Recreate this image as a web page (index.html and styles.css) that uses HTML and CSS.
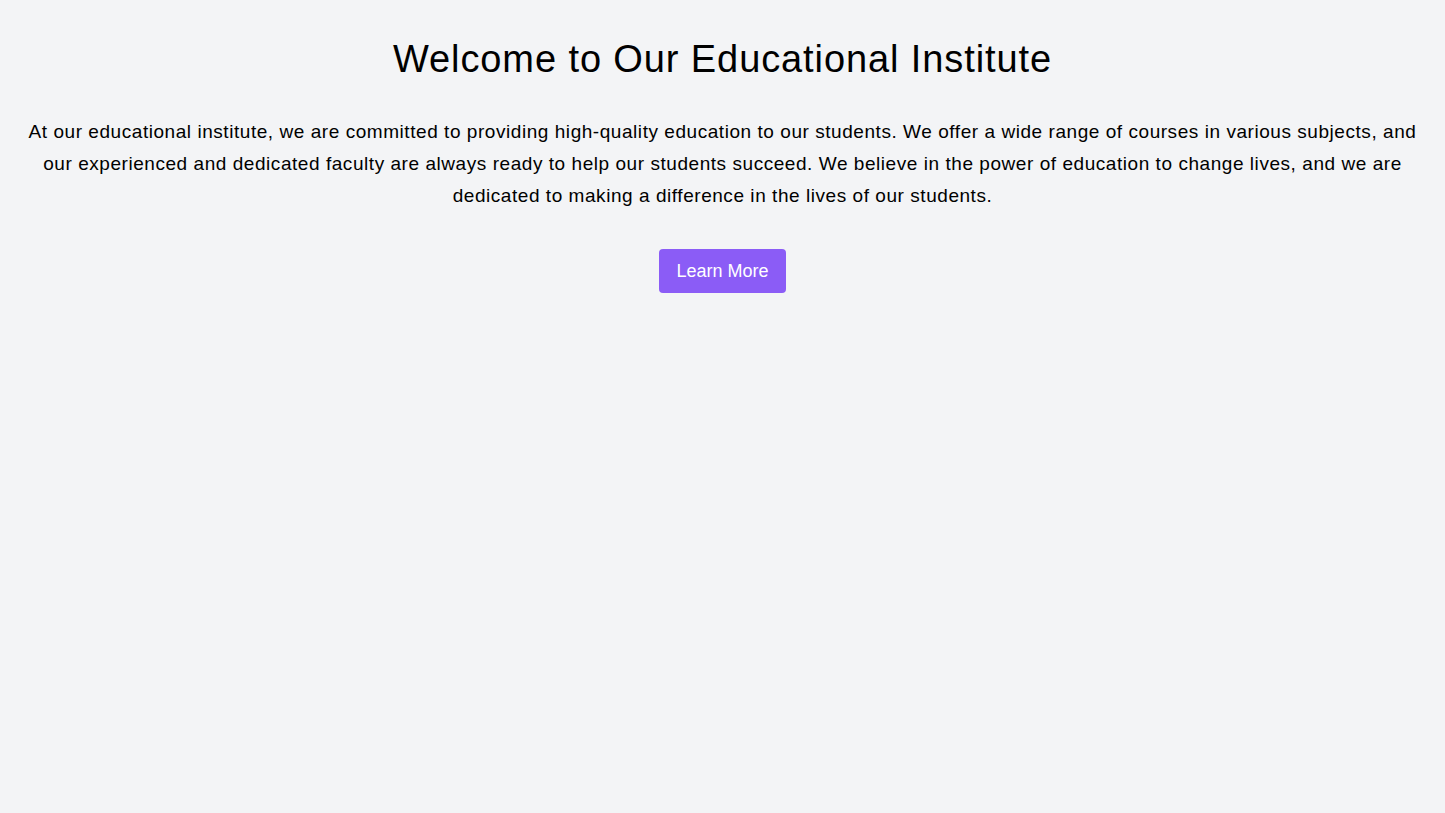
FILE: index.html
```html
<!DOCTYPE html>
<html lang="en">
<head>
<meta charset="utf-8">
<title>Educational Institute</title>
<link rel="stylesheet" href="styles.css">
</head>
<body>
<main class="page">
  <h1 class="title">Welcome to Our Educational Institute</h1>
  <p class="intro">At our educational institute, we are committed to providing high-quality education to our students. We offer a wide range of courses in various subjects, and our experienced and dedicated faculty are always ready to help our students succeed. We believe in the power of education to change lives, and we are dedicated to making a difference in the lives of our students.</p>
  <div class="actions"><a class="btn" href="#">Learn More</a></div>
</main>
</body>
</html>
```
FILE: styles.css
```css
html, body { margin: 0; padding: 0; }
body {
  background: #f3f4f6;
  color: #000;
  font-family: "Liberation Sans", Arial, sans-serif;
  min-height: 813px;
}
.page {
  padding: 39px 16px 32px;
  text-align: center;
}
.title {
  margin: 0 0 37px;
  font-size: 38px;
  line-height: 40px;
  font-weight: 400;
  letter-spacing: 0.9px;
}
.intro {
  margin: 0 0 37px;
  font-size: 19px;
  line-height: 32px;
  letter-spacing: 0.55px;
}
.actions { display: flex; justify-content: center; }
.btn {
  display: inline-block;
  background: #8b5cf6;
  color: #fff;
  text-decoration: none;
  font-size: 18px;
  line-height: 28px;
  padding: 8px 17px;
  border-radius: 4px;
}
```
